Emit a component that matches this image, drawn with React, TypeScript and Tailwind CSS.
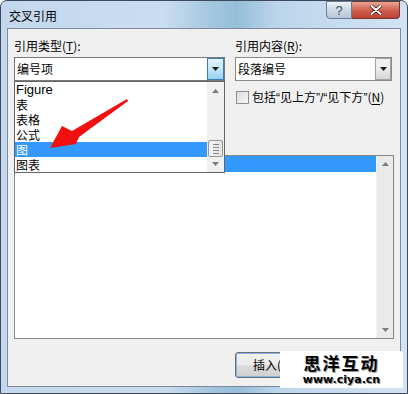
import React from "react";

const cjk = { fontFamily: '"Noto Sans CJK SC", "Liberation Sans", sans-serif' };
const latin = { fontFamily: '"Liberation Sans", sans-serif' };

const Arrow = ({ color = "#1a1a1a" }: { color?: string }) => (
  <svg width="7" height="4" viewBox="0 0 7 4">
    <path d="M0 0 H7 L3.5 4 Z" fill={color} />
  </svg>
);

const Up = () => (
  <svg width="7" height="4" viewBox="0 0 7 4">
    <path d="M0 4 H7 L3.5 0 Z" fill="#7a7a7a" />
  </svg>
);

const Down = () => (
  <svg width="7" height="4" viewBox="0 0 7 4">
    <path d="M0 0 H7 L3.5 4 Z" fill="#7a7a7a" />
  </svg>
);

const Mn = ({ k }: { k: string }) => <span className="underline underline-offset-2">{k}</span>;
const Q = ({ c }: { c: string }) => <span style={latin}>{c}</span>;

const App = () => {
  const items = ["Figure", "表", "表格", "公式", "图", "图表"];

  return (
    <div className="relative w-[408px] h-[394px] overflow-hidden bg-white text-[12px] text-black" style={cjk}>
      {/* window */}
      <div className="flex flex-col w-full h-full border border-[#3d4a5b] rounded-t-[7px] bg-[linear-gradient(90deg,#c3d8ee_0%,#cadcf0_40%,#a3c6de_52%,#95bfd9_58%,#bcd5eb_68%,#d3e3f3_100%)]">
        <div className="flex items-center h-[27px] pl-[8px] shrink-0">
          <span className="text-[12px] leading-none mt-[2px]">交叉引用</span>
          <div className="ml-auto flex self-start mr-[7px]">
            <div className="w-[26px] h-[18px] flex items-center justify-center border border-[#6d7d90] rounded-bl-[4px] bg-[linear-gradient(180deg,#eef3f8_0%,#cdd8e4_50%,#b6c5d6_100%)] text-[#3b4a5c] text-[13px] leading-none" style={latin}>
              ?
            </div>
            <div className="w-[48px] h-[18px] flex items-center justify-center border border-l-0 border-[#6d3a35] rounded-br-[4px] bg-[linear-gradient(180deg,#e8a394_0%,#d0614f_50%,#c0402f_100%)]">
              <svg width="12" height="10" viewBox="0 0 12 10">
                <path d="M1.5 1 L10.5 9 M10.5 1 L1.5 9" stroke="#3a1010" strokeWidth="3.4" strokeLinecap="round" />
                <path d="M1.5 1 L10.5 9 M10.5 1 L1.5 9" stroke="#ffffff" strokeWidth="2" strokeLinecap="round" />
              </svg>
            </div>
          </div>
        </div>

        {/* client */}
        <div className="flex-1 mx-[6px] mb-[6px] border border-[#7d8a99] bg-[#f0f0f0] pl-[6px] pt-[8px] flex flex-col">
          <div className="flex gap-[10px]">
            <div className="w-[211px] flex flex-col">
              <div className="h-[18px] leading-[18px]">
                引用类型(<Mn k="T" />):
              </div>
              <div className="mt-[2px] h-[24px] flex border border-[#7a7a7a] bg-white">
                <div className="flex-1 pl-[2px] leading-[22px]">编号项</div>
                <div className="w-[17px] flex items-center justify-center border border-[#3c7fb1] bg-[linear-gradient(180deg,#e5f4fc_0%,#c4e5f6_50%,#98d1ef_100%)]">
                  <Arrow />
                </div>
              </div>
            </div>
            <div className="w-[157px] flex flex-col">
              <div className="h-[18px] leading-[18px]">
                引用内容(<Mn k="R" />):
              </div>
              <div className="mt-[2px] h-[24px] w-[157px] flex border border-[#8a8a8a] bg-white">
                <div className="flex-1 pl-[2px] leading-[22px]">段落编号</div>
                <div className="w-[16px] flex items-center justify-center border border-[#a3a3a3] bg-[linear-gradient(180deg,#f2f2f2_0%,#ebebeb_50%,#d6d6d6_100%)]">
                  <Arrow />
                </div>
              </div>
              <div className="mt-[9px] h-[14px] flex items-center whitespace-nowrap">
                <div className="w-[13px] h-[13px] ml-[1px] shrink-0 border border-[#8e8f8f] bg-[linear-gradient(135deg,#dcdcdc_0%,#f6f6f6_100%)]" />
                <span className="ml-[3px] leading-none">
                  包括<Q c="“" />见上方<Q c="”/“" />见下方<Q c="”" />(<Mn k="N" />)
                </span>
              </div>
            </div>
          </div>

          {/* big list */}
          <div className="mt-[51px] w-[380px] h-[184px] border border-[#828790] bg-white flex">
            <div className="flex-1">
              <div className="h-[16px] bg-[#3399ff]" />
            </div>
            <div className="w-[17px] bg-[#eaeaea] flex flex-col items-center justify-between py-[6px] border-l border-[#f4f4f4]">
              <Up />
              <Down />
            </div>
          </div>

          <div className="mt-[13px] ml-[221px] w-[80px] h-[26px] border border-[#707070] rounded-[3px] bg-[linear-gradient(180deg,#f2f2f2_0%,#ebebeb_50%,#dddddd_51%,#cfcfcf_100%)] shadow-[inset_0_0_0_1px_#7eb4ea] flex items-center pl-[17px]">
            插入(<Mn k="I" />)
          </div>
        </div>
      </div>

      {/* dropdown popup */}
      <div className="absolute left-[14px] top-[81px] w-[211px] h-[92px] border border-[#646464] bg-white flex">
        <div className="flex-1 flex flex-col">
          {items.map((it) => (
            <div
              key={it}
              className={
                it === "图"
                  ? "h-[15px] leading-[15px] pl-[1px] bg-[#3399ff] text-white"
                  : "h-[15px] leading-[15px] pl-[1px]"
              }
              style={it === "Figure" ? { ...latin, fontSize: 13 } : undefined}
            >
              {it}
            </div>
          ))}
        </div>
        <div className="w-[17px] bg-[#f0f0f0] flex flex-col items-center pt-[7px] pb-[6px]">
          <Up />
          <div className="mt-[47px] w-[15px] h-[17px] border border-[#979797] rounded-[2px] bg-[linear-gradient(90deg,#f3f3f3_0%,#e4e4e4_100%)] flex flex-col items-center justify-center gap-[2px]">
            <div className="w-[6px] h-px bg-[#888]" />
            <div className="w-[6px] h-px bg-[#888]" />
            <div className="w-[6px] h-px bg-[#888]" />
            <div className="w-[6px] h-px bg-[#888]" />
          </div>
          <div className="mt-auto">
            <Down />
          </div>
        </div>
      </div>

      {/* red arrow annotation */}
      <svg className="absolute left-0 top-0 pointer-events-none" width="408" height="394" viewBox="0 0 408 394">
        <polygon points="127,99 128,101 79,137 76,144 50,148 62,126 72,131" fill="#f01010" />
      </svg>

      {/* watermark */}
      <div className="absolute left-[280px] top-[351px] w-[123px] h-[37px] bg-white flex flex-col items-center pt-[1px]">
        <div
          className="text-[17px] leading-[21px] font-bold tracking-[2px] text-black"
          style={{ ...cjk, textShadow: "1px 1px 0 #9a9a9a" }}
        >
          思洋互动
        </div>
        <div
          className="text-[11px] leading-[13px] font-bold text-black"
          style={{ fontFamily: '"DejaVu Sans", sans-serif', textShadow: "1px 1px 0 #9a9a9a" }}
        >
          www.ciya.cn
        </div>
      </div>
    </div>
  );
};

export default App;
